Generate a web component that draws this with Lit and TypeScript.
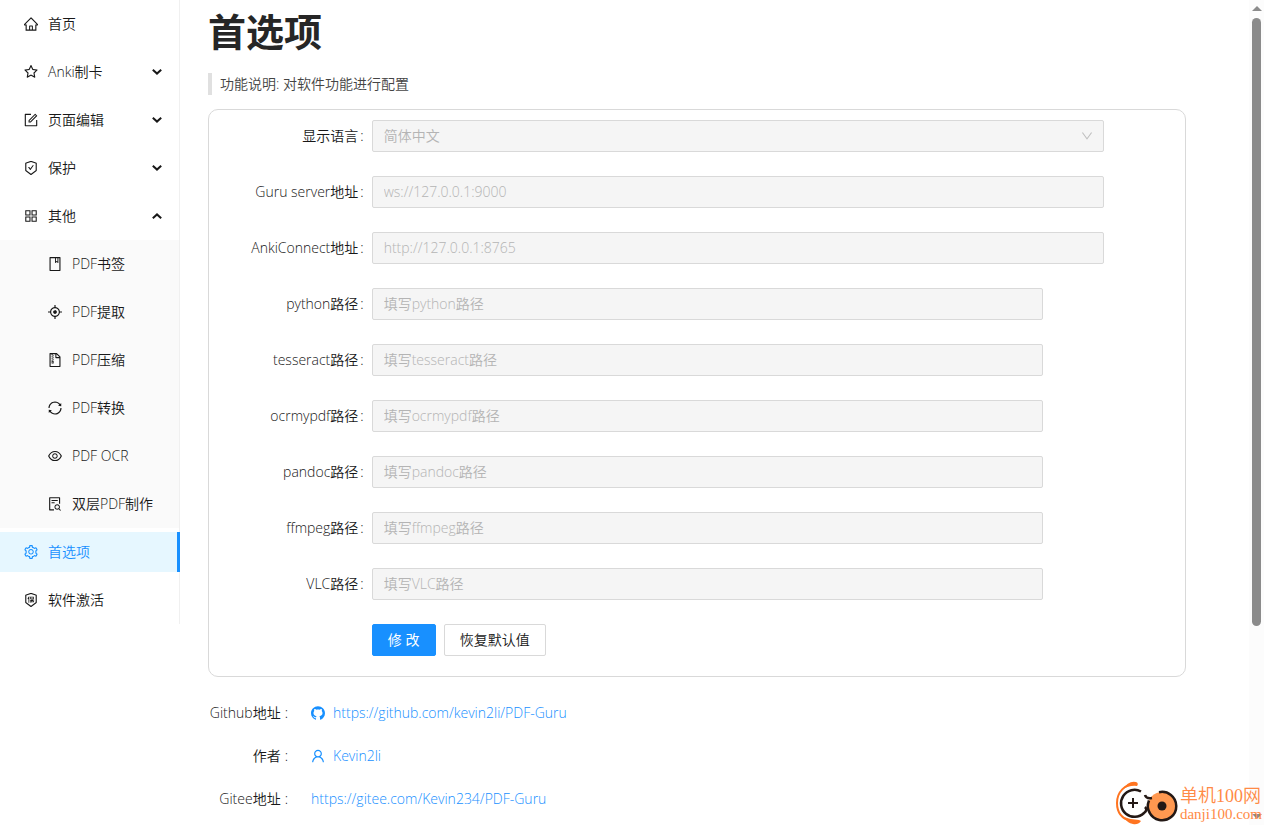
import { LitElement, html, css, svg, nothing } from "lit";
import { customElement, state } from "lit/decorators.js";
import { classMap } from "lit/directives/class-map.js";

const SHIELD =
  "M866.9 169.9L527.1 54.1C523 52.7 517.5 52 512 52s-11 .7-15.1 2.1L157.1 169.9c-8.3 2.8-15.1 12.4-15.1 21.2v482.4c0 8.8 5.7 20.4 12.6 25.9L499.3 968c3.5 2.7 8 4.1 12.6 4.1s9.2-1.4 12.6-4.1l344.7-268.6c6.9-5.4 12.6-17 12.6-25.9V191.1c.2-8.8-6.6-18.3-14.9-21.2zM810 654.3L512 886.5 214 654.3V226.7l298-101.6 298 101.6v427.6z";

const ICONS: Record<string, string> = {
  home: "M946.5 505L560.1 118.8l-25.9-25.9a31.5 31.5 0 00-44.4 0L77.5 505a63.9 63.9 0 00-18.8 46c.4 35.2 29.7 63.3 64.9 63.3h42.5V940h691.8V614.3h43.4c17.1 0 33.2-6.7 45.3-18.8a63.6 63.6 0 0018.7-45.3c0-17-6.7-33.1-18.8-45.2zM568 868H456V664h112v204zm217.9-325.7V868H632V640c0-22.1-17.9-40-40-40H432c-22.1 0-40 17.9-40 40v228H238.1V542.3h-96l370-369.7 23.1 23.1L882 542.3h-96.1z",
  star: "M908.1 353.1l-253.9-36.9L540.7 86.1c-3.1-6.3-8.2-11.4-14.5-14.5-15.8-7.8-35-1.3-42.9 14.5L369.8 316.2l-253.9 36.9c-7 1-13.4 4.3-18.3 9.3a32.05 32.05 0 00.6 45.3l183.7 179.1-43.4 252.9a31.95 31.95 0 0046.4 33.7L512 754l227.1 119.4c6.2 3.3 13.4 4.4 20.3 3.2 17.4-3 29.1-19.5 26.1-36.9l-43.4-252.9 183.7-179.1c5-4.9 8.3-11.3 9.3-18.3 2.7-17.5-9.5-33.7-27-36.3zM664.8 561.6l36.1 210.3L512 672.7 323.1 772l36.1-210.3-152.8-149L417.6 382 512 190.7 606.4 382l211.2 30.7-152.8 148.9z",
  form: "M904 512h-56c-4.4 0-8 3.6-8 8v320H184V184h320c4.4 0 8-3.6 8-8v-56c0-4.4-3.6-8-8-8H144c-17.7 0-32 14.3-32 32v736c0 17.7 14.3 32 32 32h736c17.7 0 32-14.3 32-32V520c0-4.4-3.6-8-8-8zM355.9 534.9L354 653.8c-.1 8.9 7.1 16.2 16 16.2h.4l118-2.9c2-.1 4-.9 5.4-2.3l415.9-415c3.1-3.1 3.1-8.2 0-11.3L785.4 114.3c-1.6-1.6-3.6-2.3-5.7-2.3s-4.1.8-5.7 2.3l-415.8 415a8.3 8.3 0 00-2.3 5.6zm63.5 23.6L779.7 199l45.2 45.1-360.5 359.7-45.7 1.1.7-46.4z",
  safety: SHIELD + "m-405.8-201c-3-4.1-7.8-6.6-13-6.6H336c-6.5 0-10.3 7.4-6.5 12.7l126.4 174a16.1 16.1 0 0026 0l212.6-292.7c3.8-5.3 0-12.7-6.5-12.7h-55.2c-5.1 0-10 2.5-13 6.6L468.9 542.4l-64.7-89.1z",
  insurance: SHIELD + "M290 400l84-120 50 28-24 46v336h-50V440l-32 24zM450 306h240v150H590v44h126v44H642l74 84-34 42-88-92v110h-44V590l-76 92-34-42 74-84h-70v-44h106v-56h-96zM494 350v62h146v-62z",
  appstore: "M464 144H160c-8.8 0-16 7.2-16 16v304c0 8.8 7.2 16 16 16h304c8.8 0 16-7.2 16-16V160c0-8.8-7.2-16-16-16zm-52 268H212V212h200v200zm452-268H560c-8.8 0-16 7.2-16 16v304c0 8.8 7.2 16 16 16h304c8.8 0 16-7.2 16-16V160c0-8.8-7.2-16-16-16zm-52 268H612V212h200v200zM464 544H160c-8.8 0-16 7.2-16 16v304c0 8.8 7.2 16 16 16h304c8.8 0 16-7.2 16-16V560c0-8.8-7.2-16-16-16zm-52 268H212V612h200v200zm452-268H560c-8.8 0-16 7.2-16 16v304c0 8.8 7.2 16 16 16h304c8.8 0 16-7.2 16-16V560c0-8.8-7.2-16-16-16zm-52 268H612V612h200v200z",
  book: "M832 64H192c-17.7 0-32 14.3-32 32v832c0 17.7 14.3 32 32 32h640c17.7 0 32-14.3 32-32V96c0-17.7-14.3-32-32-32zm-260 72h96v209.9L621.5 312 572 347.4V136zm220 752H232V136h280v296.9c0 3.3 1 6.6 3 9.3a15.9 15.9 0 0022.3 3.7l83.8-59.9 81.4 59.4c2.7 2 6 3.1 9.4 3.1 8.8 0 16-7.2 16-16V136h64v752z",
  aim: "M952 474H829.8C812.5 327.6 696.4 211.5 550 194.2V72c0-4.4-3.6-8-8-8h-60c-4.4 0-8 3.6-8 8v122.2C327.6 211.5 211.5 327.6 194.2 474H72c-4.4 0-8 3.6-8 8v60c0 4.4 3.6 8 8 8h122.2C211.5 696.4 327.6 812.5 474 829.8V952c0 4.4 3.6 8 8 8h60c4.4 0 8-3.6 8-8V829.8C696.4 812.5 812.5 696.4 829.8 550H952c4.4 0 8-3.6 8-8v-60c0-4.4-3.6-8-8-8zM512 756c-134.8 0-244-109.2-244-244s109.2-244 244-244 244 109.2 244 244-109.2 244-244 244zM512 392c-32.1 0-62.1 12.4-84.8 35.2-22.7 22.7-35.2 52.7-35.2 84.8s12.5 62.1 35.2 84.8C449.9 619.4 480 632 512 632s62.1-12.5 84.8-35.2C619.4 574.1 632 544 632 512s-12.5-62.1-35.2-84.8A118.57 118.57 0 00512 392z",
  zip: "M296 392h64v64h-64zm0 190v160h128V582h-64v-62h-64v62zm80 48v64h-32v-64h32zm-16-302h64v64h-64zm-64-64h64v64h-64zm64 192h64v64h-64zm0-256h64v64h-64zm494.6 88.6L639.4 73.4c-6-6-14.1-9.4-22.6-9.4H192c-17.7 0-32 14.3-32 32v832c0 17.7 14.3 32 32 32h640c17.7 0 32-14.3 32-32V311.3c0-8.5-3.4-16.6-9.4-22.7zM602 137.8L790.2 326H602V137.8zM792 888H232V136h64v64h64v-64h174v216a42 42 0 0042 42h216v494z",
  sync: "M168 504.2c1-43.7 10-86.1 26.9-126 17.3-41 42.1-77.7 73.7-109.4S337 212.3 378 195c42.4-17.9 87.4-27 133.9-27s91.5 9.1 133.8 27A341.5 341.5 0 01755 268.8c9.9 9.9 19.2 20.4 27.8 31.4l-60.2 47a8 8 0 003 14.1l175.7 43c5 1.2 9.9-2.6 9.9-7.7l.8-180.9c0-6.7-7.7-10.5-12.9-6.3l-56.4 44.1C765.8 155.1 646.2 92 511.8 92 282.7 92 96.3 275.6 92 503.8a8 8 0 008 8.2h60c4.4 0 7.9-3.5 8-7.8zm756 7.8h-60c-4.4 0-7.9 3.5-8 7.8-1 43.7-10 86.1-26.9 126-17.3 41-42.1 77.8-73.7 109.4A342.45 342.45 0 01512.1 856a342.24 342.24 0 01-243.2-100.8c-9.9-9.9-19.2-20.4-27.8-31.4l60.2-47a8 8 0 00-3-14.1l-175.7-43c-5-1.2-9.9 2.6-9.9 7.7l-.7 181c0 6.7 7.7 10.5 12.9 6.3l56.4-44.1C258.2 868.9 377.8 932 512.2 932c229.2 0 415.5-183.7 419.8-411.8a8 8 0 00-8-8.2z",
  eye: "M942.2 486.2C847.4 286.5 704.1 186 512 186c-192.2 0-335.4 100.5-430.2 300.3a60.3 60.3 0 000 51.5C176.6 737.5 319.9 838 512 838c192.2 0 335.4-100.5 430.2-300.3 7.7-16.2 7.7-35 0-51.5zM512 766c-161.3 0-279.4-81.8-362.7-254C232.6 339.8 350.7 258 512 258c161.3 0 279.4 81.8 362.7 254C791.5 684.2 673.4 766 512 766zm-4-430c-97.2 0-176 78.8-176 176s78.8 176 176 176 176-78.8 176-176-78.8-176-176-176zm0 288c-61.9 0-112-50.1-112-112s50.1-112 112-112 112 50.1 112 112-50.1 112-112 112z",
  fileSearch: "M688 312v-48c0-4.4-3.6-8-8-8H296c-4.4 0-8 3.6-8 8v48c0 4.4 3.6 8 8 8h384c4.4 0 8-3.6 8-8zm-392 88c-4.4 0-8 3.6-8 8v48c0 4.4 3.6 8 8 8h184c4.4 0 8-3.6 8-8v-48c0-4.4-3.6-8-8-8H296zm144 452H208V148h560v344c0 4.4 3.6 8 8 8h56c4.4 0 8-3.6 8-8V108c0-17.7-14.3-32-32-32H168c-17.7 0-32 14.3-32 32v784c0 17.7 14.3 32 32 32h272c4.4 0 8-3.6 8-8v-56c0-4.4-3.6-8-8-8zm445.7 51.5l-93.3-93.3C814.7 780.7 828 743.9 828 704c0-97.2-78.8-176-176-176s-176 78.8-176 176 78.8 176 176 176c35.8 0 69-10.7 96.8-29l94.7 94.7c1.6 1.6 3.6 2.3 5.6 2.3s4.1-.8 5.6-2.3l31-31a7.9 7.9 0 000-11.2zM652 816c-61.9 0-112-50.1-112-112s50.1-112 112-112 112 50.1 112 112-50.1 112-112 112z",
  setting: "M924.8 625.7l-65.5-56c3.1-19 4.7-38.4 4.7-57.8s-1.6-38.8-4.7-57.8l65.5-56a32.03 32.03 0 009.3-35.2l-.9-2.6a443.74 443.74 0 00-79.7-137.9l-1.8-2.1a32.12 32.12 0 00-35.1-9.5l-81.3 28.9c-30-24.6-63.5-44-99.7-57.6l-15.7-85a32.05 32.05 0 00-25.8-25.7l-2.7-.5c-52.1-9.4-106.9-9.4-159 0l-2.7.5a32.05 32.05 0 00-25.8 25.7l-15.8 85.4a351.86 351.86 0 00-99 57.4l-81.9-29.1a32 32 0 00-35.1 9.5l-1.8 2.1a446.02 446.02 0 00-79.7 137.9l-.9 2.6c-4.5 12.5-.8 26.5 9.3 35.2l66.3 56.6c-3.1 18.8-4.6 38-4.6 57.1 0 19.2 1.5 38.4 4.6 57.1L99 625.5a32.03 32.03 0 00-9.3 35.2l.9 2.6c18.1 50.4 44.9 96.9 79.7 137.9l1.8 2.1a32.12 32.12 0 0035.1 9.5l81.9-29.1c29.8 24.5 63.1 43.9 99 57.4l15.8 85.4a32.05 32.05 0 0025.8 25.7l2.7.5a449.4 449.4 0 00159 0l2.7-.5a32.05 32.05 0 0025.8-25.7l15.7-85a350 350 0 0099.7-57.6l81.3 28.9a32 32 0 0035.1-9.5l1.8-2.1c34.8-41.1 61.6-87.5 79.7-137.9l.9-2.6c4.5-12.3.8-26.3-9.3-35zM788.3 465.9c2.5 15.1 3.8 30.6 3.8 46.1s-1.3 31-3.8 46.1l-6.6 40.1 74.7 63.9a370.03 370.03 0 01-42.6 73.6L721 702.8l-31.4 25.8c-23.9 19.6-50.5 35-79.3 45.8l-38.1 14.3-17.9 97a377.5 377.5 0 01-85 0l-17.9-97.2-37.8-14.5c-28.5-10.8-55-26.2-78.7-45.7l-31.4-25.9-93.4 33.2c-17-22.9-31.2-47.6-42.6-73.6l75.5-64.5-6.5-40c-2.4-14.9-3.7-30.3-3.7-45.5 0-15.3 1.2-30.6 3.7-45.5l6.5-40-75.5-64.5c11.3-26.1 25.6-50.7 42.6-73.6l93.4 33.2 31.4-25.9c23.7-19.5 50.2-34.9 78.7-45.7l37.9-14.3 17.9-97.2c28.1-3.2 56.8-3.2 85 0l17.9 97 38.1 14.3c28.7 10.8 55.4 26.2 79.3 45.8l31.4 25.8 92.8-32.9c17 22.9 31.2 47.6 42.6 73.6L781.8 426l6.5 39.9zM512 326c-97.2 0-176 78.8-176 176s78.8 176 176 176 176-78.8 176-176-78.8-176-176-176zm79.2 255.2A111.6 111.6 0 01512 614c-29.9 0-58-11.7-79.2-32.8A111.6 111.6 0 01400 502c0-29.9 11.7-58 32.8-79.2C454 401.6 482.1 390 512 390c29.9 0 58 11.6 79.2 32.8A111.6 111.6 0 01624 502c0 29.9-11.7 58-32.8 79.2z",
  user: "M858.5 763.6a374 374 0 00-80.6-119.5 375.63 375.63 0 00-119.5-80.6c-.4-.2-.8-.3-1.2-.5C719.5 518 760 444.7 760 362c0-137-111-248-248-248S264 225 264 362c0 82.7 40.5 156 102.8 201.1-.4.2-.8.3-1.2.5-44.8 18.9-85 46-119.5 80.6a375.63 375.63 0 00-80.6 119.5A371.7 371.7 0 00136 901.8a8 8 0 008 8.2h60c4.4 0 7.9-3.5 8-7.8 2-77.2 33-149.5 87.8-204.3 56.7-56.7 132-87.9 212.2-87.9s155.5 31.2 212.2 87.9C779 752.7 810 825 812 902.2c.1 4.4 3.6 7.8 8 7.8h60a8 8 0 008-8.2c-1-47.8-10.9-94.3-29.5-138.2zM512 534c-45.9 0-89.1-17.9-121.6-50.4S340 407.9 340 362c0-45.9 17.9-89.1 50.4-121.6S466.1 190 512 190s89.1 17.9 121.6 50.4S684 316.1 684 362c0 45.9-17.9 89.1-50.4 121.6S557.9 534 512 534z",
  github: "M511.6 76.3C264.3 76.2 64 276.4 64 523.5 64 718.9 189.3 885 363.8 946c23.5 5.9 19.9-10.8 19.9-22.2v-77.5c-135.7 15.9-141.2-73.9-150.3-88.9C215 726 171.5 718 184.5 703c30.9-15.9 62.4 4 98.9 57.9 26.4 39.1 77.9 32.5 104 26 5.7-23.5 17.9-44.5 34.7-60.8-140.6-25.2-199.2-111-199.2-213 0-49.5 16.3-95 48.3-131.7-20.4-60.5 1.9-112.3 4.9-120 58.1-5.2 118.5 41.6 123.2 45.3 33-8.9 70.7-13.6 112.9-13.6 42.4 0 80.2 4.9 113.5 13.9 11.3-8.6 67.3-48.8 121.3-43.9 2.9 7.7 24.7 58.3 5.5 118 32.4 36.8 48.9 82.7 48.9 132.3 0 102.2-59 188.1-200 212.9a127.5 127.5 0 0138.1 91v112.5c.8 9 0 17.9 15 17.9 177.1-59.7 304.6-227 304.6-424.1 0-247.2-200.4-447.3-447.5-447.3z",
  down: "M884 256h-75c-5.1 0-9.9 2.5-12.9 6.6L512 654.2 227.9 262.6c-3-4.1-7.8-6.6-12.9-6.6h-75c-6.5 0-10.3 7.4-6.5 12.7l352.6 486.1c12.8 17.6 39 17.6 51.7 0l352.6-486.1c3.9-5.3.1-12.7-6.4-12.7z",
};

const icon = (name: string) => html`<svg class="icon" viewBox="64 64 896 896" aria-hidden="true">
  ${svg`<path fill-rule="evenodd" d=${ICONS[name]}></path>`}
</svg>`;

interface MenuEntry {
  key: string;
  label: string;
  icon: string;
  group?: boolean;
  children?: MenuEntry[];
}

const MENU: MenuEntry[] = [
  { key: "home", label: "首页", icon: "home" },
  { key: "anki", label: "Anki制卡", icon: "star", group: true },
  { key: "edit", label: "页面编辑", icon: "form", group: true },
  { key: "protect", label: "保护", icon: "safety", group: true },
  {
    key: "other",
    label: "其他",
    icon: "appstore",
    group: true,
    children: [
      { key: "bookmark", label: "PDF书签", icon: "book" },
      { key: "extract", label: "PDF提取", icon: "aim" },
      { key: "compress", label: "PDF压缩", icon: "zip" },
      { key: "convert", label: "PDF转换", icon: "sync" },
      { key: "ocr", label: "PDF OCR", icon: "eye" },
      { key: "dual", label: "双层PDF制作", icon: "fileSearch" },
    ],
  },
  { key: "settings", label: "首选项", icon: "setting" },
  { key: "activate", label: "软件激活", icon: "insurance" },
];

const base = css`
  * {
    box-sizing: border-box;
  }
  .icon {
    display: block;
    flex: none;
    width: 14px;
    height: 14px;
    fill: currentColor;
  }
  a {
    text-decoration: none;
  }
`;

@customElement("side-menu")
export class SideMenu extends LitElement {
  static styles = [
    base,
    css`
      :host {
        display: block;
        border-right: 1px solid #f0f0f0;
      }
      .list {
        margin: 0;
        padding: 0;
        list-style: none;
      }
      .item {
        display: flex;
        align-items: center;
        gap: 10px;
        width: 100%;
        height: 40px;
        margin: 4px 0;
        padding: 0 17px 0 24px;
        border: 0;
        background: none;
        color: inherit;
        font: inherit;
        text-align: left;
        white-space: nowrap;
        cursor: pointer;
      }
      .entry {
        display: flow-root;
      }
      .label {
        flex: 1;
      }
      .sub {
        background: #fafafa;
      }
      .sub .item {
        padding-left: 48px;
      }
      .selected {
        width: calc(100% + 1px);
        border-right: 3px solid #1890ff;
        background: #e6f7ff;
        color: #1890ff;
      }
      .arrow {
        width: 10px;
        height: 6px;
        fill: none;
        stroke: currentColor;
        stroke-width: 2;
      }
      .open {
        transform: rotate(180deg);
      }
    `,
  ];

  @state() private openKey = "other";

  private renderEntry(e: MenuEntry): unknown {
    const open = e.key === this.openKey;
    if (!e.group) {
      const selected = e.key === "settings";
      return html`<li class="entry">
        <a class=${classMap({ item: true, selected })} href="#${e.key}">${icon(e.icon)}<span class="label">${e.label}</span></a>
      </li>`;
    }
    return html`<li class="entry">
      <button class="item" type="button" aria-expanded=${open ? "true" : "false"} @click=${() => (this.openKey = open ? "" : e.key)}>
        ${icon(e.icon)}<span class="label">${e.label}</span>
        <svg class=${classMap({ arrow: true, open })} viewBox="0 0 10 6" aria-hidden="true"><path d="M.8.8L5 4.600 9.200.8"></path></svg>
      </button>
      ${open && e.children ? html`<ul class="list sub">${e.children.map((c) => this.renderEntry(c))}</ul>` : nothing}
    </li>`;
  }

  render() {
    return html`<nav><ul class="list">${MENU.map((e) => this.renderEntry(e))}</ul></nav>`;
  }
}

const TOOLS = ["python", "tesseract", "ocrmypdf", "pandoc", "ffmpeg", "VLC"];

@customElement("preferences-form")
export class PreferencesForm extends LitElement {
  static styles = [
    base,
    css`
      :host {
        display: block;
      }
      .card {
        display: grid;
        gap: 24px;
        padding: 10px 0 20px;
        border: 1px solid #d9d9d9;
        border-radius: 10px;
      }
      .row {
        display: grid;
        grid-template-columns: 4fr 18fr 2fr;
        align-items: center;
      }
      .label {
        padding-right: 8px;
        text-align: right;
        white-space: nowrap;
      }
      .colon {
        margin-left: 2px;
      }
      .field {
        position: relative;
        display: flex;
        grid-column: 2;
      }
      .control {
        width: 100%;
        height: 32px;
        padding: 0 11px 1px;
        border: 1px solid #d9d9d9;
        border-radius: 2px;
        appearance: none;
        background: #f5f5f5;
        color: #b4b4b4;
        font: inherit;
        opacity: 1;
      }
      .control::placeholder {
        color: #b4b4b4;
        opacity: 1;
      }
      .path {
        width: calc(100% * 11 / 12);
      }
      .caret {
        position: absolute;
        top: 10px;
        right: 11px;
        color: #bfbfbf;
      }
      .caret .icon {
        width: 12px;
        height: 12px;
      }
      .actions {
        gap: 8px;
      }
      .button {
        min-width: 64px;
        height: 32px;
        padding: 0 15px;
        border: 1px solid #d9d9d9;
        border-radius: 2px;
        background: #fff;
        color: inherit;
        font: inherit;
        cursor: pointer;
      }
      .primary {
        border-color: #1890ff;
        background: #1890ff;
        color: #fff;
        font-weight: 400;
      }
    `,
  ];

  private row(id: string, label: string, control: unknown) {
    return html`<div class="row">
      <label class="label" for=${id}>${label}<span class="colon">:</span></label>
      <div class="field">${control}</div>
    </div>`;
  }

  render() {
    return html`<form class="card" @submit=${(e: Event) => e.preventDefault()}>
      ${this.row(
        "lang",
        "显示语言",
        html`<select class="control" id="lang" disabled><option>简体中文</option></select><span class="caret">${icon("down")}</span>`
      )}
      ${this.row("guru", "Guru server地址", html`<input class="control" id="guru" value="ws://127.0.0.1:9000" disabled />`)}
      ${this.row("anki", "AnkiConnect地址", html`<input class="control" id="anki" value="http://127.0.0.1:8765" disabled />`)}
      ${TOOLS.map((t) => this.row(t, `${t}路径`, html`<input class="control path" id=${t} placeholder="填写${t}路径" disabled />`))}
      <div class="row">
        <div class="field actions">
          <button class="button primary" type="submit">修 改</button>
          <button class="button" type="button">恢复默认值</button>
        </div>
      </div>
    </form>`;
  }
}

@customElement("site-mark")
export class SiteMark extends LitElement {
  static styles = css`
    :host {
      display: flex;
      align-items: center;
      gap: 1px;
      color: #ff8a45;
      white-space: nowrap;
    }
    .logo {
      width: 64px;
      height: 44px;
    }
    .text {
      padding-top: 4px;
    }
    .name {
      font: 18px/19px "Liberation Serif", "Noto Sans CJK SC", serif;
      font-weight: 350;
    }
    .site {
      font: 15px/17px "Liberation Serif", serif;
    }
  `;

  render() {
    return html`<svg class="logo" viewBox="0 0 64 44" aria-hidden="true">
        <path d="M20 3C10 3 2 11 2 22s6 16 14 18" fill="none" stroke="#ff7420" stroke-width="2"></path>
        <path d="M7 9Q14-1 21 1q3 1 1 4-8-1-15 4zM9 36q7 3 15 3l2 1q-3 4-8 3-6-1-9-7z" fill="#ff7420"></path>
        <path d="M26 10.500A13.500 13.500 0 1 0 29 32Q33 29 30 26" fill="none" stroke="#231815" stroke-width="2.500"></path>
        <circle cx="47" cy="25" r="14" fill="#ff9850"></circle>
        <path d="M44 11.200A14.200 14.200 0 1 1 34 19.500M34 19.500Q31 27 35 32M30 14q1 4 7 3" fill="none" stroke="#231815" stroke-width="2.500"></path>
        <circle cx="47" cy="25" r="4.500" fill="#231815"></circle>
        <path d="M13 22h10M18 17v10" stroke="#231815" stroke-width="2"></path>
      </svg>
      <div class="text">
        <div class="name">单机100网</div>
        <div class="site">danji100.com</div>
      </div>`;
  }
}

@customElement("app-root")
export class AppRoot extends LitElement {
  static styles = [
    base,
    css`
      :host {
        display: grid;
        grid-template-columns: 180px minmax(0, 1fr) 15px;
        min-height: 100vh;
        background: #fff;
        color: #181818;
        font: 14px/22px "Open Sans", "Noto Sans CJK SC", sans-serif;
        font-weight: 350;
      }
      .menu {
        align-self: start;
      }
      .main {
        padding: 8px 63px 0 28px;
      }
      .title {
        margin: 0 0 18px;
        color: #262626;
        font-size: 38px;
        font-weight: 700;
        line-height: 47px;
      }
      .note {
        margin: 0 0 14px;
        padding-left: 8px;
        border-left: 4px solid #e0e0e0;
        color: #444;
      }
      .links {
        display: grid;
        grid-template-columns: 80px 1fr;
        gap: 21px 23px;
        margin: 25px 0 0;
      }
      .term {
        text-align: right;
        white-space: nowrap;
      }
      .colon {
        margin-left: 4px;
      }
      .value {
        margin: 0;
      }
      .link {
        display: flex;
        align-items: center;
        gap: 8px;
        width: fit-content;
        color: #1890ff;
      }
      .bar {
        display: flex;
        flex-direction: column;
        align-items: center;
        height: 100vh;
        padding: 6px 0 5px;
        background: #fcfcfc;
      }
      .tip {
        width: 10px;
        height: 6px;
        fill: #8b8b8b;
      }
      .track {
        flex: 1;
        width: 9px;
        padding: 6px 0;
      }
      .thumb {
        height: 77%;
        border-radius: 5px;
        background: #8b8b8b;
      }
      .mark {
        position: absolute;
        right: 2px;
        bottom: 0;
      }
    `,
  ];

  private item(label: string, href: string, text: string, glyph = "") {
    return html`<dt class="term">${label}<span class="colon">:</span></dt>
      <dd class="value"><a class="link" href=${href}>${glyph ? icon(glyph) : nothing}${text}</a></dd>`;
  }

  render() {
    return html`<side-menu class="menu"></side-menu>
      <main class="main">
        <h1 class="title">首选项</h1>
        <blockquote class="note">功能说明: 对软件功能进行配置</blockquote>
        <preferences-form></preferences-form>
        <dl class="links">
          ${this.item("Github地址", "https://github.com/kevin2li/PDF-Guru", "https://github.com/kevin2li/PDF-Guru", "github")}
          ${this.item("作者", "#author", "Kevin2li", "user")}
          ${this.item("Gitee地址", "https://gitee.com/Kevin234/PDF-Guru", "https://gitee.com/Kevin234/PDF-Guru")}
        </dl>
      </main>
      <div class="bar" aria-hidden="true">
        <svg class="tip" viewBox="0 0 10 6"><path d="M0 5L5 0l5 5z"></path></svg>
        <div class="track"><div class="thumb"></div></div>
        <svg class="tip" viewBox="0 0 10 6"><path d="M0 0l5 5 5-5z"></path></svg>
      </div>
      <site-mark class="mark"></site-mark>`;
  }
}
